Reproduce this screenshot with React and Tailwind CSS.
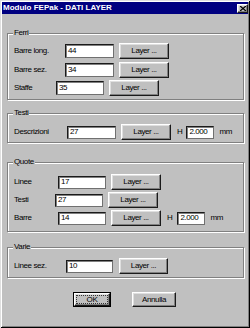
import React from 'react';

const raised =
  'border border-t-white border-l-white border-r-[#1a1a1a] border-b-[#1a1a1a] shadow-[inset_-1px_-1px_0_#808080,inset_1px_1px_0_#dfdfdf]';
const sunken =
  'bg-white border border-t-[#1a1a1a] border-l-[#1a1a1a] border-r-[#707070] border-b-[#707070] shadow-[inset_1px_1px_0_#808080]';
const txt = 'text-[8px] leading-[10px] tracking-[-0.4px] text-black';

function Group({ title, h, mt, pt, children }) {
  return (
    <div
      className={`relative ${h} ${mt} ${pt} w-[237px] pl-[6px] border border-[#808080] shadow-[inset_1px_1px_0_#fff,1px_1px_0_#fff]`}
    >
      <span className={`absolute left-[5px] -top-[6px] px-[1px] bg-[#c0c0c0] ${txt}`}>
        {title}
      </span>
      {children}
    </div>
  );
}

function Field({ value, w, h = 'h-[13px]' }) {
  return (
    <div className={`${w} ${h} ${sunken} flex items-center pl-[2px] ${txt}`}>
      {value}
    </div>
  );
}

function LayerBtn({ ml, w }) {
  return (
    <div className={`${ml} ${w} h-[16px] ${raised} flex items-center justify-center ${txt}`}>
      Layer ...
    </div>
  );
}

function Row({ label, lw, value, iw, ih, bml, bw, mt, children }) {
  return (
    <div className={`flex items-center h-[16px] ${mt}`}>
      <span className={`${lw} ${txt}`}>{label}</span>
      <Field value={value} w={iw} h={ih} />
      <LayerBtn ml={bml} w={bw} />
      {children}
    </div>
  );
}

function Height({ hml, iml, value }) {
  return (
    <>
      <span className={`${hml} ${txt}`}>H</span>
      <Field value={value} w={`w-[28px] ${iml}`} />
      <span className={`ml-[5px] ${txt}`}>mm</span>
    </>
  );
}

export default function App() {
  return (
    <div className="w-[250px] h-[328px] bg-[#c0c0c0] p-[2px] font-['Liberation_Sans',Arial,sans-serif] shadow-[inset_1px_1px_0_#dfdfdf,inset_-1px_-1px_0_#000,inset_2px_2px_0_#fff,inset_-2px_-2px_0_#808080]">
      {/* Title bar */}
      <div className="h-[12px] bg-[#000080] flex items-center justify-between pl-[1px]">
        <span className="text-white text-[8px] font-bold leading-none">Modulo FEPak - DATI LAYER</span>
        <div className={`w-[11px] h-[9px] bg-[#c0c0c0] ${raised} flex items-center justify-center`}>
          <svg width="6" height="5" viewBox="0 0 6 5">
            <path d="M0 0 L6 5 M6 0 L0 5" stroke="#000" strokeWidth="1.3" />
          </svg>
        </div>
      </div>

      <div className="px-[5px]">
        <Group title="Ferri" h="h-[67px]" mt="mt-[19px]" pt="pt-[9px]">
          <Row label="Barre long." lw="w-[51px]" value="44" iw="w-[49px]" ih="h-[14px]" bml="ml-[5px]" bw="w-[50px]" mt="mt-0" />
          <Row label="Barre sez." lw="w-[51px]" value="34" iw="w-[49px]" ih="h-[14px]" bml="ml-[5px]" bw="w-[50px]" mt="mt-[3px]" />
          <Row label="Staffe" lw="w-[42px]" value="35" iw="w-[48px]" ih="h-[14px]" bml="ml-[5px]" bw="w-[50px]" mt="mt-[2px]" />
        </Group>

        <Group title="Testi" h="h-[30px]" mt="mt-[13px]" pt="pt-[10px]">
          <Row label="Descrizioni" lw="w-[53px]" value="27" iw="w-[49px]" ih="h-[13px]" bml="ml-[5px]" bw="w-[50px]" mt="mt-0">
            <Height hml="ml-[6px]" iml="ml-[4px]" value="2.000" />
          </Row>
        </Group>

        <Group title="Quote" h="h-[70px]" mt="mt-[19px]" pt="pt-[11px]">
          <Row label="Linee" lw="w-[44px]" value="17" iw="w-[48px]" ih="h-[13px]" bml="ml-[5px]" bw="w-[50px]" mt="mt-0" />
          <Row label="Testi" lw="w-[41px]" value="27" iw="w-[48px]" ih="h-[13px]" bml="ml-[5px]" bw="w-[50px]" mt="mt-[2px]" />
          <Row label="Barre" lw="w-[44px]" value="14" iw="w-[48px]" ih="h-[13px]" bml="ml-[5px]" bw="w-[50px]" mt="mt-[2px]">
            <Height hml="ml-[6px]" iml="ml-[5px]" value="2.000" />
          </Row>
        </Group>

        <Group title="Varie" h="h-[31px]" mt="mt-[15px]" pt="pt-[10px]">
          <Row label="Linee sez." lw="w-[52px]" value="10" iw="w-[47px]" ih="h-[13px]" bml="ml-[6px]" bw="w-[49px]" mt="mt-0" />
        </Group>

        {/* OK / Annulla */}
        <div className="flex mt-[14px] ml-[66px]">
          <div className="w-[38px] h-[15px] border border-black">
            <div className={`w-full h-full ${raised} p-[1px]`}>
              <div className="w-full h-full border border-dotted border-[#333] flex items-center justify-center text-[8px] leading-none tracking-[-0.4px] text-black">
                OK
              </div>
            </div>
          </div>
          <div className={`ml-[21px] w-[44px] h-[15px] ${raised} flex items-center justify-center ${txt}`}>
            Annulla
          </div>
        </div>
      </div>
    </div>
  );
}
